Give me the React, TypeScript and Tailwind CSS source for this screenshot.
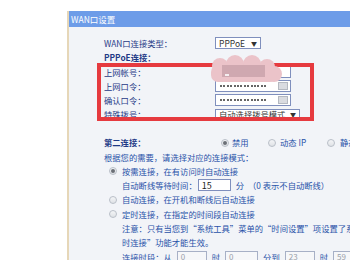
const font = "font-['SimSun','Noto_Sans_CJK_SC',sans-serif]";

function Radio({ checked = false }: { checked?: boolean }) {
    return (
        <span className="w-[8px] h-[8px] rounded-full border border-[#b9bfc8] bg-gradient-to-b from-[#f4f5f7] to-[#dfe2e6] flex items-center justify-center shrink-0">
            {checked && <span className="w-[4px] h-[4px] rounded-full bg-[#6b6f76]" />}
        </span>
    );
}

function Row({ children, className = "" }: { children: React.ReactNode; className?: string }) {
    return <div className={`h-[14.3px] flex items-center whitespace-nowrap ${className}`}>{children}</div>;
}

function Password() {
    return (
        <div className="w-[76px] h-[12px] bg-white border border-[#7f8fbd] flex items-center pl-[4px] pr-[2px]">
            <span className="flex-1 flex gap-[1.4px]">
                {Array.from({ length: 14 }).map((_, i) => (
                    <span key={i} className="w-[2px] h-[2px] rounded-full bg-[#333]" />
                ))}
            </span>
            <span className="w-[10px] h-[8px] bg-[#d9dbe0] border border-[#b4b8c0]" />
        </div>
    );
}

function SmallInput({ value, width = "w-[30px]" }: { value: string; width?: string }) {
    return (
        <span className={`${width} shrink-0 h-[11px] border border-[#a7b0c6] bg-[#f6f7f9] text-[#9aa0aa] text-[8px] leading-none flex items-center pl-[3px]`}>
            {value}
        </span>
    );
}

export default function App() {
    const label = "w-[111px] shrink-0 text-[#1f3a86]";

    return (
        <div className={`w-[350px] h-[260px] bg-white overflow-hidden pt-[11px] pl-[67px] ${font}`}>
            <div className="relative h-[260px] border-l-2 border-[#e6d7b8] bg-[#f2f4f8]">
                {/* header */}
                <div className="h-[16px] bg-[#6d9ce8] text-white text-[8.5px] flex items-center pl-[2px]">
                    WAN口设置
                </div>

                <div className="pl-[35px] pt-[9px] text-[8.3px] text-[#2852a8]">
                    <Row>
                        <span className={label}>WAN口连接类型：</span>
                        <span className="w-[46px] h-[12px] bg-white border border-[#7f8fbd] text-[#333] text-[8.5px] flex items-center justify-between px-[3px]">
                            PPPoE <span className="text-[6px]">▼</span>
                        </span>
                    </Row>
                    <Row>
                        <span className={`${label} font-bold`}>PPPoE连接：</span>
                    </Row>
                    <Row>
                        <span className={label}>上网帐号：</span>
                        <span className="w-[76px] h-[12px] bg-white border border-[#7f8fbd]" />
                    </Row>
                    <Row>
                        <span className={label}>上网口令：</span>
                        <Password />
                    </Row>
                    <Row>
                        <span className={label}>确认口令：</span>
                        <Password />
                    </Row>
                    <Row>
                        <span className={label}>特殊拨号：</span>
                        <span className="w-[85px] h-[12px] bg-white border border-[#7f8fbd] text-[#333] flex items-center justify-between px-[3px]">
                            自动选择拨号模式 <span className="text-[6px]">▼</span>
                        </span>
                    </Row>

                    <Row className="mt-[13.6px]">
                        <span className={`${label} font-bold`}>第二连接：</span>
                        <span className="w-[47px] shrink-0 ml-[6px] flex items-center gap-[3px]">
                            <Radio checked />禁用
                        </span>
                        <span className="w-[59px] shrink-0 flex items-center gap-[4px]">
                            <Radio />动态 IP
                        </span>
                        <span className="shrink-0 flex items-center gap-[5px]">
                            <Radio />静态 IP
                        </span>
                    </Row>
                    <Row>根据您的需要，请选择对应的连接模式：</Row>
                    <Row className="pl-[5px] gap-[5px]">
                        <Radio checked />按需连接，在有访问时自动连接
                    </Row>
                    <Row className="pl-[18px]">
                        自动断线等待时间：
                        <span className="ml-[1px] w-[33px] h-[12px] bg-white border border-[#7f8fbd] text-[#222] text-[9px] leading-none flex items-center pl-[3px]">
                            15
                        </span>
                        <span className="ml-[5px]">分</span>
                        <span className="ml-[4px]">（0 表示不自动断线）</span>
                    </Row>
                    <Row className="pl-[5px] gap-[5px]">
                        <Radio />自动连接，在开机和断线后自动连接
                    </Row>
                    <Row className="pl-[5px] gap-[5px]">
                        <Radio />定时连接，在指定的时间段自动连接
                    </Row>
                    <Row className="pl-[18px]">注意：只有当您到“系统工具”菜单的“时间设置”项设置了系统时间后，定</Row>
                    <Row className="pl-[18px]">时连接”功能才能生效。</Row>
                    <Row className="pl-[18px] gap-[5px]">
                        <span className="shrink-0">连接时段：从</span>
                        <SmallInput value="0" />
                        <span className="shrink-0">时</span>
                        <SmallInput value="0" width="w-[33px]" />
                        <span className="shrink-0">分到</span>
                        <SmallInput value="23" />
                        <span className="shrink-0">时</span>
                        <SmallInput value="59" />
                    </Row>
                </div>

                {/* red highlight */}
                <div className="absolute left-[28px] top-[52px] w-[217px] h-[58px] border-[4px] border-[#e63a3f]" />

                {/* pink blur blob */}
                <svg className="absolute left-[139px] top-[44px]" width="76" height="28" viewBox="0 0 76 28">
                    <g fill="#ebc3c9">
                        <circle cx="12" cy="11" r="8" />
                        <circle cx="27" cy="9" r="9" />
                        <circle cx="44" cy="9" r="9" />
                        <circle cx="59" cy="12" r="8" />
                        <circle cx="66" cy="19" r="8" />
                        <rect x="3" y="10" width="66" height="17" rx="7" />
                    </g>
                    <rect x="14" y="10" width="43" height="12" fill="#cfa8b0" />
                    <rect x="17" y="19" width="4" height="2" fill="#f4eef0" />
                </svg>
            </div>
        </div>
    );
}
